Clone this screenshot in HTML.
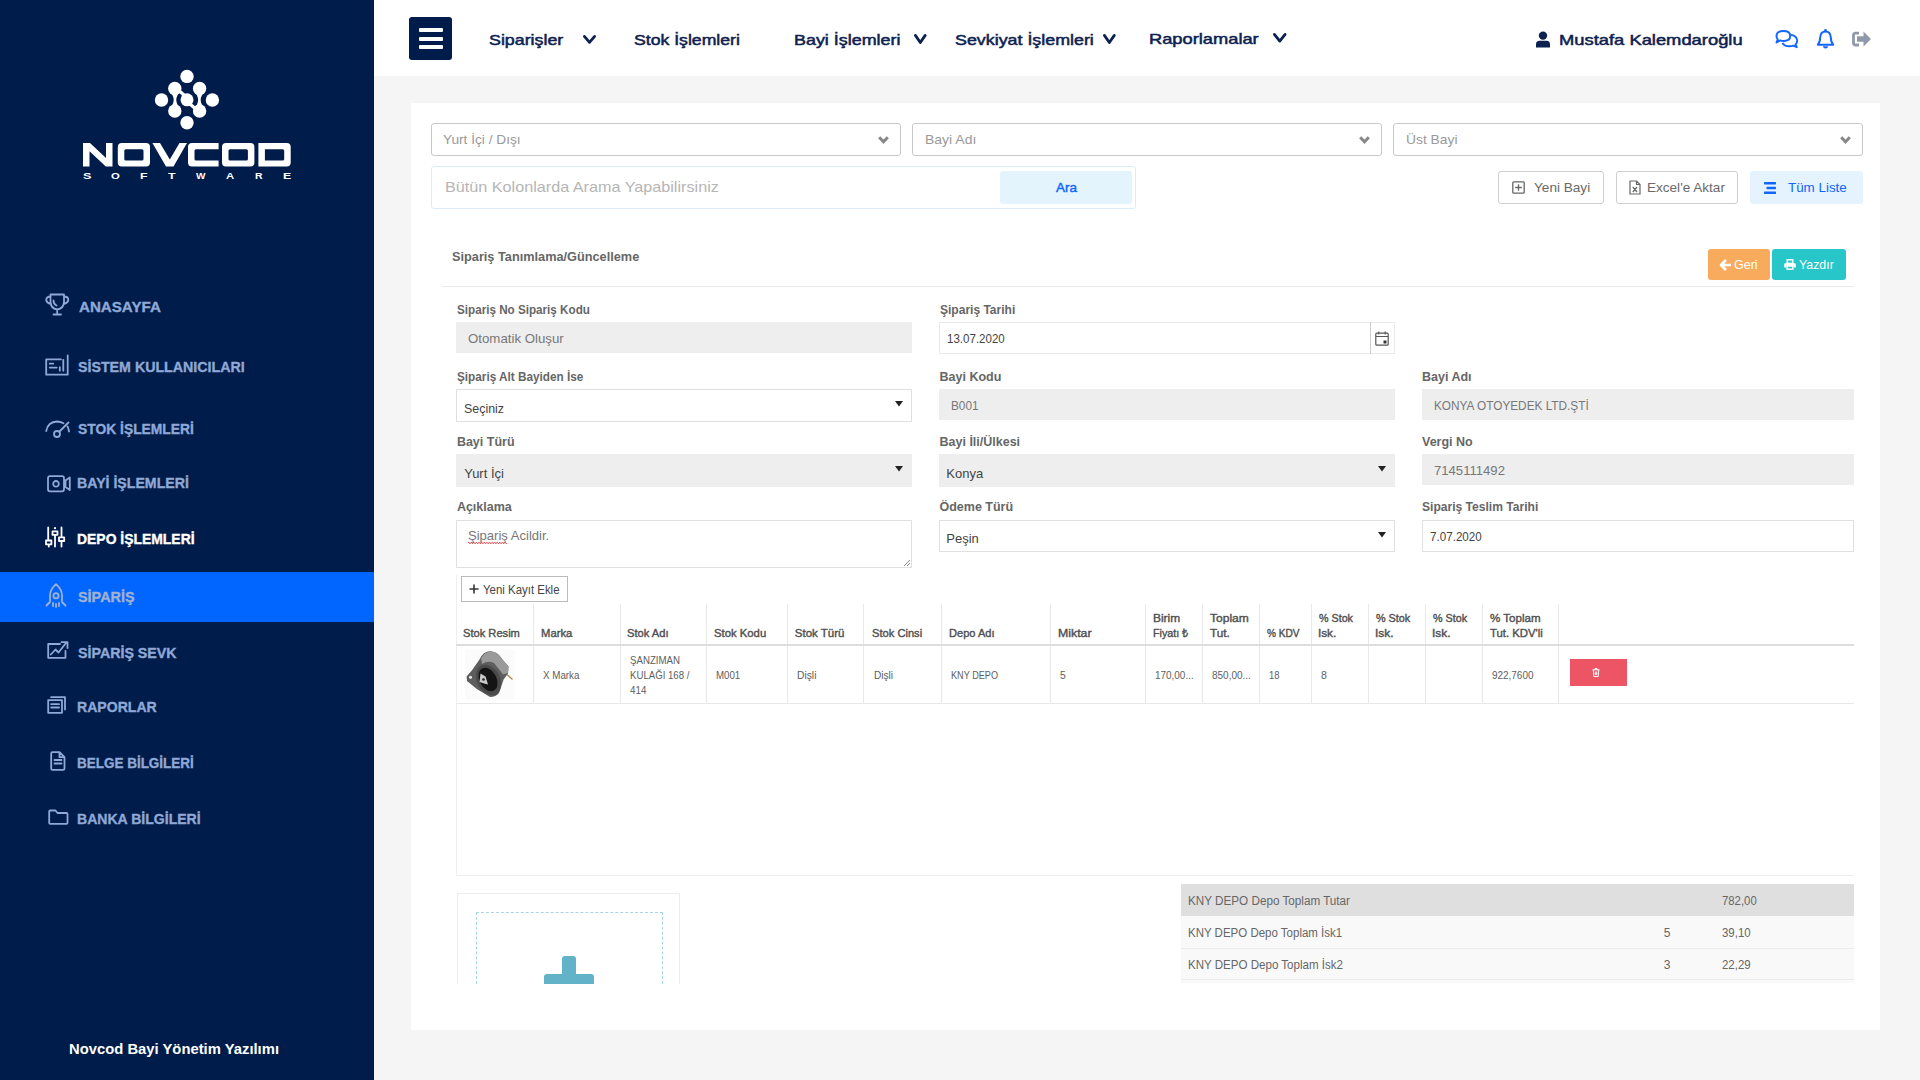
<!DOCTYPE html>
<html><head><meta charset="utf-8"><title>Novcod</title>
<style>
*{box-sizing:border-box;margin:0;padding:0}
html,body{width:1920px;height:1080px;overflow:hidden;background:#f5f5f5;font-family:"Liberation Sans",sans-serif}
.a{position:absolute}
.t{white-space:nowrap;transform-origin:0 0}
svg{overflow:visible}
</style></head><body>
<div class="a" style="left:0px;top:0px;width:374px;height:1080px;background:#001c4a"></div>
<div class="a" style="left:374px;top:0px;width:1546px;height:76px;background:#fff"></div>
<div class="a" style="left:411px;top:103px;width:1469px;height:927px;background:#fff"></div>
<svg class="a" style="left:150px;top:66px" width="74" height="66" viewBox="150 66 74 66">
<g fill="#fff"><circle cx="187" cy="76.4" r="6.7"/><circle cx="174.8" cy="88.5" r="6.7"/><circle cx="199.6" cy="88.5" r="6.7"/><circle cx="161.5" cy="100" r="6.7"/><circle cx="187" cy="99.8" r="6.5"/><circle cx="212.4" cy="100" r="6.7"/><circle cx="174.8" cy="111" r="6.7"/><circle cx="199.6" cy="111" r="6.7"/><circle cx="187" cy="122.8" r="6.7"/></g>
<g fill="#fff"><path d="M169 90.5Q178.4 100 169 109.5L181 109.5Q171.6 100 181 90.5Z"/><path d="M193.4 90.5Q202.8 100 193.4 109.5L205.4 109.5Q196 100 205.4 90.5Z"/></g><g stroke="#fff" stroke-width="3.2" stroke-linecap="round"><path d="M180 91.5L184.5 95.5"/><path d="M190 104L194.5 108"/></g></svg>
<svg class="a" style="left:83px;top:143px" width="209" height="25" viewBox="0 0 209 25">
<path fill="#fff" fill-rule="evenodd" d="M0 0H7L23 15V0H29.5V23.6H22.8L6.5 8.2V23.6H0Z M38.8 0H63Q67 0 67 4V19.6Q67 23.6 63 23.6H38.8Q34.8 23.6 34.8 19.6V4Q34.8 0 38.8 0Z M42.8 6.2Q41.3 6.2 41.3 7.7V15.9Q41.3 17.4 42.8 17.4H59Q60.5 17.4 60.5 15.9V7.7Q60.5 6.2 59 6.2Z M69.4 0H77L86.8 16.5L96.5 0H104L90.5 23.6H83Z M135.6 0H109Q105 0 105 4V19.6Q105 23.6 109 23.6H135.6V17.4H113Q111.5 17.4 111.5 15.9V7.7Q111.5 6.2 113 6.2H135.6Z M143 0H167.4Q171.4 0 171.4 4V19.6Q171.4 23.6 167.4 23.6H143Q139 23.6 139 19.6V4Q139 0 143 0Z M147 6.2Q145.5 6.2 145.5 7.7V15.9Q145.5 17.4 147 17.4H163.4Q164.9 17.4 164.9 15.9V7.7Q164.9 6.2 163.4 6.2Z M175.4 0H203.7Q207.7 0 207.7 4V19.6Q207.7 23.6 203.7 23.6H175.4Z M181.9 6.2V17.4H199.7Q201.2 17.4 201.2 15.9V7.7Q201.2 6.2 199.7 6.2Z"/></svg>
<div class="a" style="left:0px;top:572px;width:374px;height:50px;background:#0066ff"></div>
<svg class="a" style="left:45px;top:293px" width="25" height="23" viewBox="0 0 25 23" fill="none" stroke-width="1.8" stroke-linecap="round" stroke-linejoin="round" stroke="#8fa8d6"><path d="M5.5 1.5H19V8.5Q19 15.5 12.2 16.5Q5.5 15.5 5.5 8.5Z M5.5 3.5Q1.2 3.5 1.2 7Q1.7 10 6 11 M19 3.5Q23.3 3.5 23.3 7Q22.8 10 18.5 11 M12.2 16.5V21 M8.5 21.5H16 M8.5 7.5Q8.5 11 11.5 12.5"/></svg>
<svg class="a" style="left:45px;top:354px" width="24" height="22" viewBox="0 0 24 22" fill="none" stroke-width="1.8" stroke-linecap="round" stroke-linejoin="round" stroke="#8fa8d6"><path d="M16 5.3H1.2V20.7H22.7V1.3 M4.7 9.7H8.2 M4.7 13.6H11.7 M14.8 13.2V16.7 M18.3 5.8V16.7"/></svg>
<svg class="a" style="left:45px;top:420px" width="24" height="19" viewBox="0 0 24 19" fill="none" stroke-width="1.8" stroke-linecap="round" stroke-linejoin="round" stroke="#8fa8d6"><path d="M1.2 11Q3 1.8 12 1.5Q15.5 1.5 18.5 3.2 M24 11.5Q23.5 8 22.5 6.5 M14.5 11.5L23.5 2.5 M12 14m-3 0a3 3 0 1 0 6 0a3 3 0 1 0 -6 0"/></svg>
<svg class="a" style="left:46.5px;top:474.5px" width="25" height="18" viewBox="0 0 25 18" fill="none" stroke-width="1.8" stroke-linecap="round" stroke-linejoin="round" stroke="#8fa8d6"><path d="M3 1.2H15Q17 1.2 17 3.2V14.3Q17 16.3 15 16.3H3Q1 16.3 1 14.3V3.2Q1 1.2 3 1.2Z M9 8.8m-2.8 0a2.8 2.8 0 1 0 5.6 0a2.8 2.8 0 1 0 -5.6 0 M18.5 5.5L22.8 2.5V15L18.5 12Z"/></svg>
<svg class="a" style="left:45px;top:527px" width="21" height="21" viewBox="0 0 21 21" fill="none" stroke-width="1.8" stroke-linecap="round" stroke-linejoin="round" stroke="#fff"><path d="M3.2 0.5V12.5 M3.8 17.5V19.5 M1 13.5H6.4V17.3H1Z M10 7.8V19.5 M7.5 4.4H12.5V7.8H7.5Z M16.5 0.5V10 M16.5 14V19.5 M14 10.3H19.2V14H14Z"/></svg>
<svg class="a" style="left:45px;top:527px" width="21" height="21"><circle cx="10" cy="1.2" r="1.1" fill="#fff"/></svg>
<svg class="a" style="left:45px;top:583px" width="22" height="24" viewBox="0 0 22 24" fill="none" stroke-width="1.8" stroke-linecap="round" stroke-linejoin="round" stroke="#a0b1d1"><path d="M5 19Q5 16 5 12.5Q5 6.5 11 1.2Q17 6.5 17 12.5V19 M5 19L1.5 22.5 M17 19L20.5 22.5 M8 20V23 M11 21V24 M14 20V23 M11 12.8m-2.6 0a2.6 2.6 0 1 0 5.2 0a2.6 2.6 0 1 0 -5.2 0"/></svg>
<svg class="a" style="left:47px;top:641px" width="23" height="18" viewBox="0 0 23 18" fill="none" stroke-width="1.8" stroke-linecap="round" stroke-linejoin="round" stroke="#8fa8d6"><path d="M13 3H1.2V16.8H18.5V10 M3.8 13.5L8.5 8.5L11.5 11.5L19 2 M14.5 1.2H20.5V7"/></svg>
<svg class="a" style="left:47px;top:696px" width="20" height="18" viewBox="0 0 20 18" fill="none" stroke-width="1.8" stroke-linecap="round" stroke-linejoin="round" stroke="#8fa8d6"><path d="M1.2 4.2H15V16.8H1.2Z M4.2 1.2H18V13.5 M4.2 8.2H12 M4.2 11.5H12"/></svg>
<svg class="a" style="left:50px;top:751px" width="16" height="20" viewBox="0 0 16 20" fill="none" stroke-width="1.8" stroke-linecap="round" stroke-linejoin="round" stroke="#8fa8d6"><path d="M2.5 1.2H9.5L14.5 6.2V17.5Q14.5 18.8 13.2 18.8H2.5Q1.2 18.8 1.2 17.5V2.5Q1.2 1.2 2.5 1.2Z M9.5 1.2V6.2H14.5 M4.5 9H11.5 M4.5 12.5H11.5"/></svg>
<svg class="a" style="left:48px;top:809px" width="21" height="16" viewBox="0 0 21 16" fill="none" stroke-width="1.8" stroke-linecap="round" stroke-linejoin="round" stroke="#8fa8d6"><path d="M1.2 2.5Q1.2 1.5 2.2 1.5H7.5L9.5 4H18.5Q19.5 4 19.5 5V13.8Q19.5 14.8 18.5 14.8H2.2Q1.2 14.8 1.2 13.8Z"/></svg>
<div class="a" style="left:409px;top:17px;width:43px;height:43px;background:#001c4a;border-radius:3px"></div>
<div class="a" style="left:419px;top:28px;width:24px;height:4.1px;background:#fff;border-radius:1px"></div>
<div class="a" style="left:419px;top:36.7px;width:24px;height:4.1px;background:#fff;border-radius:1px"></div>
<div class="a" style="left:419px;top:45.2px;width:24px;height:4.1px;background:#fff;border-radius:1px"></div>
<svg class="a" style="left:582.75px;top:35px" width="13.0" height="8.75" viewBox="0 0 13.0 8.75"><path d="M1.4 1.4L6.5 7.35L11.6 1.4" fill="none" stroke="#0d2150" stroke-width="2.8" stroke-linecap="round" stroke-linejoin="round"/></svg>
<svg class="a" style="left:913.6px;top:33.7px" width="12.600000000000023" height="9.899999999999999" viewBox="0 0 12.600000000000023 9.899999999999999"><path d="M1.4 1.4L6.300000000000011 8.499999999999998L11.200000000000022 1.4" fill="none" stroke="#0d2150" stroke-width="2.8" stroke-linecap="round" stroke-linejoin="round"/></svg>
<svg class="a" style="left:1102.5px;top:33.7px" width="12.700000000000045" height="9.899999999999999" viewBox="0 0 12.700000000000045 9.899999999999999"><path d="M1.4 1.4L6.350000000000023 8.499999999999998L11.300000000000045 1.4" fill="none" stroke="#0d2150" stroke-width="2.8" stroke-linecap="round" stroke-linejoin="round"/></svg>
<svg class="a" style="left:1272.7px;top:33.2px" width="13.5" height="9.5" viewBox="0 0 13.5 9.5"><path d="M1.4 1.4L6.75 8.1L12.1 1.4" fill="none" stroke="#0d2150" stroke-width="2.8" stroke-linecap="round" stroke-linejoin="round"/></svg>
<svg class="a" style="left:1535px;top:31px" width="16" height="17" viewBox="0 0 16 17"><circle cx="8" cy="4.6" r="4.2" fill="#0d2150"/><path d="M1 16.5V13.5Q1 9.8 4.5 9.8H11.5Q15 9.8 15 13.5V16.5Z" fill="#0d2150"/></svg>
<svg class="a" style="left:1774px;top:28px" width="26" height="22" viewBox="0 0 26 22" fill="none" stroke="#1166ff" stroke-width="1.9" stroke-linejoin="round">
<path d="M9.5 3Q16.2 3 16.2 8Q16.2 13 9.5 13Q7.5 13 6.3 12.4L2.5 14.5L3.8 11.5Q2.5 10 2.5 8Q2.5 3 9.5 3Z"/>
<path d="M16.5 6.6Q23.3 8 23.2 12.8Q23.2 15 21.5 16.5L22.8 19.2L19 17.6Q17.5 18.2 15.5 18.2Q10 18.2 8.5 14.8"/></svg>
<svg class="a" style="left:1816px;top:28px" width="19" height="22" viewBox="0 0 19 22">
<path d="M9.5 3.5Q14.5 3.5 14.8 9.5Q15 14.5 17.2 16.8H1.8Q4 14.5 4.2 9.5Q4.5 3.5 9.5 3.5Z" fill="none" stroke="#1166ff" stroke-width="2" stroke-linejoin="round"/>
<circle cx="9.5" cy="2.4" r="1.4" fill="#1166ff"/><path d="M7 18.2H12Q12 20.6 9.5 20.6Q7 20.6 7 18.2Z" fill="#1166ff"/></svg>
<svg class="a" style="left:1851px;top:30px" width="22" height="18" viewBox="0 0 22 18">
<path d="M8 3.2H4.5Q2.5 3.2 2.5 5.2V13Q2.5 15 4.5 15H8" fill="none" stroke="#9099aa" stroke-width="2.8"/>
<path d="M6 6.3H12.5V1.5L20 9L12.5 16.5V11.7H6Z" fill="#9099aa"/></svg>
<div class="a" style="left:431px;top:123px;width:470px;height:33px;border:1px solid #c9c9c9;border-radius:3px"></div>
<svg class="a" style="left:878.0px;top:134px" width="11" height="11" viewBox="0 0 11 11"><path d="M1.2 3.2L5.5 7.8L9.8 3.2" fill="none" stroke="#888" stroke-width="3" stroke-linejoin="miter"/></svg>
<div class="a" style="left:912px;top:123px;width:470px;height:33px;border:1px solid #c9c9c9;border-radius:3px"></div>
<svg class="a" style="left:1359.0px;top:134px" width="11" height="11" viewBox="0 0 11 11"><path d="M1.2 3.2L5.5 7.8L9.8 3.2" fill="none" stroke="#888" stroke-width="3" stroke-linejoin="miter"/></svg>
<div class="a" style="left:1393px;top:123px;width:470px;height:33px;border:1px solid #c9c9c9;border-radius:3px"></div>
<svg class="a" style="left:1840.0px;top:134px" width="11" height="11" viewBox="0 0 11 11"><path d="M1.2 3.2L5.5 7.8L9.8 3.2" fill="none" stroke="#888" stroke-width="3" stroke-linejoin="miter"/></svg>
<div class="a" style="left:431px;top:166px;width:705px;height:43px;border:1px solid #dcedf9;border-radius:3px"></div>
<div class="a" style="left:1000px;top:171px;width:132px;height:32.5px;background:#e4f4fc;border-radius:3px"></div>
<div class="a" style="left:1498.4px;top:171px;width:105.5px;height:32.5px;border:1px solid #cfcfcf;border-radius:3px"></div>
<svg class="a" style="left:1512px;top:180.5px" width="13" height="13" viewBox="0 0 13 13" fill="none" stroke="#666" stroke-width="1.3"><rect x="0.8" y="0.8" width="11.4" height="11.4" rx="1"/><path d="M6.5 3.2V9.8M3.2 6.5H9.8"/></svg>
<div class="a" style="left:1616.2px;top:171px;width:121.5px;height:32.5px;border:1px solid #cfcfcf;border-radius:3px"></div>
<svg class="a" style="left:1629px;top:179.5px" width="12" height="15" viewBox="0 0 12 15" fill="none" stroke="#666" stroke-width="1.2"><path d="M1 1H7.5L11 4.5V14H1Z M7.5 1V4.5H11 M3.8 7L8 12 M8 7L3.8 12"/></svg>
<div class="a" style="left:1750.3px;top:171px;width:112.5px;height:32.5px;background:#e4f3fd;border-radius:3px"></div>
<svg class="a" style="left:1764px;top:181.5px" width="12" height="12" viewBox="0 0 12 12" fill="#1166ff"><rect x="0" y="0" width="12" height="2.4" rx="0.6"/><rect x="2.5" y="4.8" width="9.5" height="2.4" rx="0.6"/><rect x="0" y="9.6" width="12" height="2.4" rx="0.6"/></svg>
<div class="a" style="left:1708px;top:249px;width:61.8px;height:30.5px;background:#f8ab5d;border-radius:3px"></div>
<svg class="a" style="left:1719.5px;top:259px" width="12" height="12" viewBox="0 0 12 12"><path d="M6 1L1 6L6 11 M1.5 6H11" fill="none" stroke="#fff" stroke-width="2.6" stroke-linejoin="round"/></svg>
<div class="a" style="left:1772.4px;top:249px;width:73.6px;height:30.5px;background:#26c6c9;border-radius:3px"></div>
<svg class="a" style="left:1784px;top:259px" width="12" height="11" viewBox="0 0 12 11"><rect x="3.2" y="0.8" width="5.6" height="3.6" fill="none" stroke="#fff" stroke-width="1.5"/><path d="M1.2 4.3H10.8Q11.8 4.3 11.8 5.3V8.6H9.6V7H2.4V8.6H0.2V5.3Q0.2 4.3 1.2 4.3Z" fill="#fff"/><rect x="3.2" y="7" width="5.6" height="3.2" fill="none" stroke="#fff" stroke-width="1.5"/></svg>
<div class="a" style="left:441.5px;top:285.5px;width:1412.5px;height:1.0px;background:#eaeaea"></div>
<div class="a" style="left:456.4px;top:322px;width:455.70000000000005px;height:30.5px;background:#eee"></div>
<div class="a" style="left:939px;top:322px;width:455.70000000000005px;height:32.30000000000001px;background:#fff;border:1px solid #e9e9e9"></div>
<div class="a" style="left:1370px;top:322px;width:1px;height:32.30000000000001px;background:#cfcfcf"></div>
<svg class="a" style="left:1375px;top:331px" width="14" height="15" viewBox="0 0 14 15" fill="none" stroke="#555" stroke-width="1.2"><rect x="0.8" y="2.2" width="12.4" height="12" rx="1"/><path d="M0.8 5.5H13.2 M3.8 0.5V3.5 M10.2 0.5V3.5"/><rect x="8.5" y="9.5" width="3" height="3" fill="#333" stroke="none"/></svg>
<div class="a" style="left:456px;top:389px;width:456px;height:33px;background:#fff;border:1px solid #e0e0e0"></div>
<svg class="a" style="left:895px;top:400.5px" width="8" height="5.5" viewBox="0 0 8 5.5"><path d="M0 0H8L4 5.5Z" fill="#222"/></svg>
<div class="a" style="left:939px;top:389.2px;width:455.70000000000005px;height:30.80000000000001px;background:#eee"></div>
<div class="a" style="left:1422px;top:388.9px;width:432.0999999999999px;height:30.80000000000001px;background:#eee"></div>
<div class="a" style="left:456.4px;top:454.2px;width:455.70000000000005px;height:32.60000000000002px;background:#eee"></div>
<svg class="a" style="left:895px;top:466px" width="8" height="5.5" viewBox="0 0 8 5.5"><path d="M0 0H8L4 5.5Z" fill="#222"/></svg>
<div class="a" style="left:939px;top:454.2px;width:455.70000000000005px;height:32.60000000000002px;background:#eee"></div>
<svg class="a" style="left:1377.5px;top:466px" width="8" height="5.5" viewBox="0 0 8 5.5"><path d="M0 0H8L4 5.5Z" fill="#222"/></svg>
<div class="a" style="left:1422px;top:454.2px;width:432.0999999999999px;height:30.600000000000023px;background:#eee"></div>
<div class="a" style="left:456.4px;top:520.4px;width:455.70000000000005px;height:47.60000000000002px;background:#fff;border:1px solid #e0e0e0"></div>
<svg class="a" style="left:468px;top:540.5px" width="40" height="3" viewBox="0 0 40 3"><path d="M0 2 q0.65 -1.6 1.3 0 t1.3 0 q0.65 -1.6 1.3 0 t1.3 0 q0.65 -1.6 1.3 0 t1.3 0 q0.65 -1.6 1.3 0 t1.3 0 q0.65 -1.6 1.3 0 t1.3 0 q0.65 -1.6 1.3 0 t1.3 0 q0.65 -1.6 1.3 0 t1.3 0 q0.65 -1.6 1.3 0 t1.3 0 q0.65 -1.6 1.3 0 t1.3 0 q0.65 -1.6 1.3 0 t1.3 0 q0.65 -1.6 1.3 0 t1.3 0 q0.65 -1.6 1.3 0 t1.3 0 q0.65 -1.6 1.3 0 t1.3 0 q0.65 -1.6 1.3 0 t1.3 0 q0.65 -1.6 1.3 0 t1.3 0" fill="none" stroke="#e8303a" stroke-width="0.9"/></svg>
<svg class="a" style="left:902px;top:558px" width="9" height="9" viewBox="0 0 9 9"><path d="M8 2L2 8 M8 5L5 8" stroke="#888" stroke-width="1"/></svg>
<div class="a" style="left:939px;top:520.4px;width:455.70000000000005px;height:31.5px;background:#fff;border:1px solid #e0e0e0"></div>
<svg class="a" style="left:1377.5px;top:532px" width="8" height="5.5" viewBox="0 0 8 5.5"><path d="M0 0H8L4 5.5Z" fill="#222"/></svg>
<div class="a" style="left:1422px;top:520.3px;width:432.0999999999999px;height:31.90000000000009px;background:#fff;border:1px solid #e0e0e0"></div>
<div class="a" style="left:456px;top:574.5px;width:1px;height:300.5px;background:#efefef"></div>
<div class="a" style="left:456px;top:875px;width:1398px;height:1px;background:#ededed"></div>
<div class="a" style="left:461.4px;top:576.4px;width:106.2px;height:25.3px;border:1px solid #bbb;background:#fff"></div>
<svg class="a" style="left:468.5px;top:584px" width="10" height="10" viewBox="0 0 10 10"><path d="M5 0.5V9.5M0.5 5H9.5" stroke="#333" stroke-width="1.6"/></svg>
<div class="a" style="left:532.6px;top:604.3px;width:1.0px;height:99.10000000000002px;background:#e8e8e8"></div>
<div class="a" style="left:619.5px;top:604.3px;width:1.0px;height:99.10000000000002px;background:#e8e8e8"></div>
<div class="a" style="left:705.8px;top:604.3px;width:1.0px;height:99.10000000000002px;background:#e8e8e8"></div>
<div class="a" style="left:786.8px;top:604.3px;width:1.0px;height:99.10000000000002px;background:#e8e8e8"></div>
<div class="a" style="left:863.3px;top:604.3px;width:1.0px;height:99.10000000000002px;background:#e8e8e8"></div>
<div class="a" style="left:940.5px;top:604.3px;width:1.0px;height:99.10000000000002px;background:#e8e8e8"></div>
<div class="a" style="left:1050.4px;top:604.3px;width:1.0px;height:99.10000000000002px;background:#e8e8e8"></div>
<div class="a" style="left:1144.6px;top:604.3px;width:1.0px;height:99.10000000000002px;background:#e8e8e8"></div>
<div class="a" style="left:1201.7px;top:604.3px;width:1.0px;height:99.10000000000002px;background:#e8e8e8"></div>
<div class="a" style="left:1258.8px;top:604.3px;width:1.0px;height:99.10000000000002px;background:#e8e8e8"></div>
<div class="a" style="left:1310.6px;top:604.3px;width:1.0px;height:99.10000000000002px;background:#e8e8e8"></div>
<div class="a" style="left:1367.7px;top:604.3px;width:1.0px;height:99.10000000000002px;background:#e8e8e8"></div>
<div class="a" style="left:1424.8px;top:604.3px;width:1.0px;height:99.10000000000002px;background:#e8e8e8"></div>
<div class="a" style="left:1482.0px;top:604.3px;width:1.0px;height:99.10000000000002px;background:#e8e8e8"></div>
<div class="a" style="left:1557.9px;top:604.3px;width:1.0px;height:99.10000000000002px;background:#e8e8e8"></div>
<div class="a" style="left:456px;top:643.5px;width:1398px;height:2.0px;background:#ddd"></div>
<div class="a" style="left:456px;top:703px;width:1398px;height:1px;background:#e8e8e8"></div>
<div class="a" style="left:1570px;top:659px;width:57px;height:26.6px;background:#ed5565"></div>
<svg class="a" style="left:1592px;top:668px" width="8" height="9" viewBox="0 0 8 9" fill="none" stroke="#fff" stroke-width="1"><path d="M0.5 1.8H7.5 M3 1.8V0.5H5V1.8 M1.3 1.8L1.8 8.5H6.2L6.7 1.8 M3.3 3.5V7 M4.7 3.5V7"/></svg>
<svg class="a" style="left:458px;top:646px" width="64" height="58" viewBox="0 0 64 58">
<rect x="7" y="3.8" width="49.5" height="50" fill="#fbfbfb"/>
<path d="M21.5 13.4Q26 4 34 5.4Q40 6 44 13L50.5 20.4L50 27.5L45.7 33.3L41 47Q38 51 32 51L18.8 43L9 35L8.6 30.5L14 24.2Z" fill="#5d5d5d"/>
<path d="M23 12.5Q27 5 33.5 5.5Q40 6.5 44 13L50.5 20.4L50 27L45 28.5L36 17Q30 14 24 18Z" fill="#9a9a9a"/>
<ellipse cx="30.5" cy="34" rx="11.5" ry="16" transform="rotate(-28 30.5 34)" fill="#4a4a4a"/>
<ellipse cx="30" cy="33.5" rx="8.5" ry="12.5" transform="rotate(-28 30 33.5)" fill="#141414"/>
<path d="M22.5 27.5L27.5 30.5L30 38.5L26 37.5L21.5 36Z" fill="#c8c8c8"/>
<circle cx="25.5" cy="33.5" r="1.3" fill="#222"/>
<path d="M49 28.5L54.5 33.5" stroke="#a88a40" stroke-width="1.3"/>
<circle cx="12.5" cy="31.2" r="1.5" fill="#eee"/>
</svg>
<div class="a" style="left:456.6px;top:893.2px;width:223px;height:91px;border:1px solid #ededed;border-bottom:none"></div>
<div class="a" style="left:475.6px;top:912.2px;width:187px;height:72px;border:1px dashed #a6d5e2;border-bottom:none"></div>
<div class="a" style="left:561.9px;top:956px;width:14px;height:28px;background:#62b3c8;border-radius:3px 3px 0 0"></div>
<div class="a" style="left:543.7px;top:974.3px;width:50.7px;height:9.7px;background:#62b3c8;border-radius:3px 3px 0 0"></div>
<div class="a" style="left:1181.2px;top:884.3px;width:672.3999999999999px;height:32.0px;background:#e0dfe0"></div>
<div class="a" style="left:1181.2px;top:916.3px;width:672.3999999999999px;height:67.20000000000005px;background:#f9f9f9"></div>
<div class="a" style="left:1181.2px;top:947.5px;width:672.3999999999999px;height:1.0px;background:#ececec"></div>
<div class="a" style="left:1181.2px;top:979px;width:672.3999999999999px;height:1px;background:#ececec"></div>
<div class="a" style="left:411px;top:983.5px;width:1469px;height:46.5px;background:#fff"></div>
<div class="a t" style="left:83.00px;top:172.00px;font-size:9px;line-height:9px;color:#fff;font-weight:bold;transform:scaleX(1.4000);">S</div>
<div class="a t" style="left:111.30px;top:172.00px;font-size:9px;line-height:9px;color:#fff;font-weight:bold;transform:scaleX(1.2571);">O</div>
<div class="a t" style="left:140.00px;top:172.00px;font-size:9px;line-height:9px;color:#fff;font-weight:bold;transform:scaleX(1.3667);">F</div>
<div class="a t" style="left:168.20px;top:172.00px;font-size:9px;line-height:9px;color:#fff;font-weight:bold;transform:scaleX(1.3667);">T</div>
<div class="a t" style="left:195.70px;top:172.00px;font-size:9px;line-height:9px;color:#fff;font-weight:bold;transform:scaleX(1.1111);">W</div>
<div class="a t" style="left:226.20px;top:172.00px;font-size:9px;line-height:9px;color:#fff;font-weight:bold;transform:scaleX(1.2571);">A</div>
<div class="a t" style="left:254.90px;top:172.00px;font-size:9px;line-height:9px;color:#fff;font-weight:bold;transform:scaleX(1.1714);">R</div>
<div class="a t" style="left:283.00px;top:172.00px;font-size:9px;line-height:9px;color:#fff;font-weight:bold;transform:scaleX(1.3667);">E</div>
<div class="a t" style="left:79.00px;top:299.00px;font-size:15px;line-height:15px;color:#8fa8d6;font-weight:bold;transform:scaleX(1.0086);-webkit-text-stroke:0.35px currentColor;">ANASAYFA</div>
<div class="a t" style="left:78.00px;top:359.00px;font-size:15px;line-height:15px;color:#8fa8d6;font-weight:bold;transform:scaleX(0.9479);-webkit-text-stroke:0.35px currentColor;">SİSTEM KULLANICILARI</div>
<div class="a t" style="left:78.00px;top:421.00px;font-size:15px;line-height:15px;color:#8fa8d6;font-weight:bold;transform:scaleX(0.9231);-webkit-text-stroke:0.35px currentColor;">STOK İŞLEMLERİ</div>
<div class="a t" style="left:77.06px;top:475.00px;font-size:15px;line-height:15px;color:#8fa8d6;font-weight:bold;transform:scaleX(0.9429);-webkit-text-stroke:0.35px currentColor;">BAYİ İŞLEMLERİ</div>
<div class="a t" style="left:77.07px;top:531.00px;font-size:15px;line-height:15px;color:#fff;font-weight:bold;transform:scaleX(0.9282);-webkit-text-stroke:0.35px currentColor;">DEPO İŞLEMLERİ</div>
<div class="a t" style="left:78.00px;top:589.00px;font-size:15px;line-height:15px;color:#a0b1d1;font-weight:bold;transform:scaleX(0.9593);-webkit-text-stroke:0.35px currentColor;">SİPARİŞ</div>
<div class="a t" style="left:78.00px;top:645.00px;font-size:15px;line-height:15px;color:#8fa8d6;font-weight:bold;transform:scaleX(0.9488);-webkit-text-stroke:0.35px currentColor;">SİPARİŞ SEVK</div>
<div class="a t" style="left:77.06px;top:699.00px;font-size:15px;line-height:15px;color:#8fa8d6;font-weight:bold;transform:scaleX(0.9386);-webkit-text-stroke:0.35px currentColor;">RAPORLAR</div>
<div class="a t" style="left:77.10px;top:755.00px;font-size:15px;line-height:15px;color:#8fa8d6;font-weight:bold;transform:scaleX(0.8984);-webkit-text-stroke:0.35px currentColor;">BELGE BİLGİLERİ</div>
<div class="a t" style="left:77.36px;top:811.00px;font-size:15px;line-height:15px;color:#8fa8d6;font-weight:bold;transform:scaleX(0.9374);-webkit-text-stroke:0.35px currentColor;">BANKA BİLGİLERİ</div>
<div class="a t" style="left:69.40px;top:1042.00px;font-size:14px;line-height:14px;color:#fff;font-weight:bold;transform:scaleX(1.0571);">Novcod Bayi Yönetim Yazılımı</div>
<div class="a t" style="left:489.00px;top:32.00px;font-size:15px;line-height:15px;color:#0d2150;font-weight:normal;transform:scaleX(1.1875);-webkit-text-stroke:0.5px currentColor;">Siparişler</div>
<div class="a t" style="left:634.00px;top:32.00px;font-size:15px;line-height:15px;color:#0d2150;font-weight:normal;transform:scaleX(1.1763);-webkit-text-stroke:0.5px currentColor;">Stok İşlemleri</div>
<div class="a t" style="left:794.31px;top:32.00px;font-size:15px;line-height:15px;color:#0d2150;font-weight:normal;transform:scaleX(1.1940);-webkit-text-stroke:0.5px currentColor;">Bayi İşlemleri</div>
<div class="a t" style="left:955.20px;top:32.00px;font-size:15px;line-height:15px;color:#0d2150;font-weight:normal;transform:scaleX(1.1894);-webkit-text-stroke:0.5px currentColor;">Sevkiyat İşlemleri</div>
<div class="a t" style="left:1149.18px;top:31.00px;font-size:15px;line-height:15px;color:#0d2150;font-weight:normal;transform:scaleX(1.2185);-webkit-text-stroke:0.5px currentColor;">Raporlamalar</div>
<div class="a t" style="left:1558.98px;top:32.00px;font-size:15px;line-height:15px;color:#0d2150;font-weight:normal;transform:scaleX(1.2236);-webkit-text-stroke:0.5px currentColor;">Mustafa Kalemdaroğlu</div>
<div class="a t" style="left:443.40px;top:133.00px;font-size:13.5px;line-height:13.5px;color:#999;font-weight:normal;transform:scaleX(1.0150);">Yurt İçi / Dışı</div>
<div class="a t" style="left:924.96px;top:133.00px;font-size:13.5px;line-height:13.5px;color:#999;font-weight:normal;transform:scaleX(1.0366);">Bayi Adı</div>
<div class="a t" style="left:1405.77px;top:133.00px;font-size:13.5px;line-height:13.5px;color:#999;font-weight:normal;transform:scaleX(1.0251);">Üst Bayi</div>
<div class="a t" style="left:444.52px;top:179.00px;font-size:15px;line-height:15px;color:#b5b5b5;font-weight:normal;transform:scaleX(1.0791);">Bütün Kolonlarda Arama Yapabilirsiniz</div>
<div class="a t" style="left:1055.70px;top:181.00px;font-size:13px;line-height:13px;color:#1166ff;font-weight:normal;transform:scaleX(1.0333);-webkit-text-stroke:0.45px currentColor;">Ara</div>
<div class="a t" style="left:1533.60px;top:181.00px;font-size:13px;line-height:13px;color:#6a6a6a;font-weight:normal;transform:scaleX(1.0457);">Yeni Bayi</div>
<div class="a t" style="left:1646.56px;top:181.00px;font-size:13px;line-height:13px;color:#6a6a6a;font-weight:normal;transform:scaleX(1.0423);">Excel'e Aktar</div>
<div class="a t" style="left:1788.20px;top:181.00px;font-size:13px;line-height:13px;color:#1166ff;font-weight:normal;transform:scaleX(1.0292);">Tüm Liste</div>
<div class="a t" style="left:452.00px;top:250.00px;font-size:13px;line-height:13px;color:#666;font-weight:bold;transform:scaleX(0.9791);">Sipariş Tanımlama/Güncelleme</div>
<div class="a t" style="left:1733.90px;top:258.00px;font-size:13px;line-height:13px;color:#fff;font-weight:normal;transform:scaleX(0.9606);">Geri</div>
<div class="a t" style="left:1799.00px;top:258.00px;font-size:13px;line-height:13px;color:#fff;font-weight:normal;transform:scaleX(0.9496);">Yazdır</div>
<div class="a t" style="left:456.90px;top:304.00px;font-size:12.5px;line-height:12.5px;color:#666;font-weight:bold;transform:scaleX(0.9333);">Sipariş No Sipariş Kodu</div>
<div class="a t" style="left:939.50px;top:304.00px;font-size:12.5px;line-height:12.5px;color:#666;font-weight:bold;transform:scaleX(0.9615);">Şipariş Tarihi</div>
<div class="a t" style="left:456.90px;top:371.00px;font-size:12.5px;line-height:12.5px;color:#666;font-weight:bold;transform:scaleX(0.9409);">Şipariş Alt Bayiden İse</div>
<div class="a t" style="left:939.50px;top:371.00px;font-size:12.5px;line-height:12.5px;color:#666;font-weight:bold;">Bayi Kodu</div>
<div class="a t" style="left:1422.00px;top:371.00px;font-size:12.5px;line-height:12.5px;color:#666;font-weight:bold;">Bayi Adı</div>
<div class="a t" style="left:456.90px;top:436.00px;font-size:12.5px;line-height:12.5px;color:#666;font-weight:bold;">Bayi Türü</div>
<div class="a t" style="left:939.50px;top:436.00px;font-size:12.5px;line-height:12.5px;color:#666;font-weight:bold;">Bayi İli/Ülkesi</div>
<div class="a t" style="left:1422.00px;top:436.00px;font-size:12.5px;line-height:12.5px;color:#666;font-weight:bold;">Vergi No</div>
<div class="a t" style="left:456.90px;top:501.00px;font-size:12.5px;line-height:12.5px;color:#666;font-weight:bold;">Açıklama</div>
<div class="a t" style="left:939.50px;top:501.00px;font-size:12.5px;line-height:12.5px;color:#666;font-weight:bold;">Ödeme Türü</div>
<div class="a t" style="left:1422.00px;top:501.00px;font-size:12.5px;line-height:12.5px;color:#666;font-weight:bold;transform:scaleX(0.9655);">Sipariş Teslim Tarihi</div>
<div class="a t" style="left:468.10px;top:332.00px;font-size:13px;line-height:13px;color:#777;font-weight:normal;transform:scaleX(1.0192);">Otomatik Oluşur</div>
<div class="a t" style="left:947.30px;top:333.00px;font-size:12px;line-height:12px;color:#444;font-weight:normal;transform:scaleX(0.9622);">13.07.2020</div>
<div class="a t" style="left:464.20px;top:402.00px;font-size:13px;line-height:13px;color:#444;font-weight:normal;transform:scaleX(0.9564);">Seçiniz</div>
<div class="a t" style="left:951.25px;top:400.00px;font-size:12px;line-height:12px;color:#777;font-weight:normal;transform:scaleX(0.9823);">B001</div>
<div class="a t" style="left:1433.50px;top:400.00px;font-size:12px;line-height:12px;color:#777;font-weight:normal;transform:scaleX(0.9829);">KONYA OTOYEDEK LTD.ŞTİ</div>
<div class="a t" style="left:464.20px;top:467.00px;font-size:13px;line-height:13px;color:#444;font-weight:normal;">Yurt İçi</div>
<div class="a t" style="left:946.30px;top:467.00px;font-size:13px;line-height:13px;color:#444;font-weight:normal;">Konya</div>
<div class="a t" style="left:1433.50px;top:465.00px;font-size:12.5px;line-height:12.5px;color:#777;font-weight:normal;transform:scaleX(1.0486);">7145111492</div>
<div class="a t" style="left:468.10px;top:529.00px;font-size:13px;line-height:13px;color:#777;font-weight:normal;transform:scaleX(1.0034);">Şipariş Acildir.</div>
<div class="a t" style="left:946.30px;top:532.00px;font-size:13px;line-height:13px;color:#444;font-weight:normal;">Peşin</div>
<div class="a t" style="left:1429.90px;top:531.00px;font-size:12px;line-height:12px;color:#444;font-weight:normal;transform:scaleX(0.9700);">7.07.2020</div>
<div class="a t" style="left:483.00px;top:584.00px;font-size:12px;line-height:12px;color:#444;font-weight:normal;transform:scaleX(0.9529);">Yeni Kayıt Ekle</div>
<div class="a t" style="left:463.30px;top:628.00px;font-size:11.5px;line-height:11.5px;color:#505050;font-weight:normal;transform:scaleX(0.9672);-webkit-text-stroke:0.4px currentColor;">Stok Resim</div>
<div class="a t" style="left:541.10px;top:628.00px;font-size:11.5px;line-height:11.5px;color:#505050;font-weight:normal;transform:scaleX(0.9799);-webkit-text-stroke:0.4px currentColor;">Marka</div>
<div class="a t" style="left:627.40px;top:628.00px;font-size:11.5px;line-height:11.5px;color:#505050;font-weight:normal;transform:scaleX(0.9706);-webkit-text-stroke:0.4px currentColor;">Stok Adı</div>
<div class="a t" style="left:713.70px;top:628.00px;font-size:11.5px;line-height:11.5px;color:#505050;font-weight:normal;transform:scaleX(0.9835);-webkit-text-stroke:0.4px currentColor;">Stok Kodu</div>
<div class="a t" style="left:794.80px;top:628.00px;font-size:11.5px;line-height:11.5px;color:#505050;font-weight:normal;-webkit-text-stroke:0.4px currentColor;">Stok Türü</div>
<div class="a t" style="left:871.80px;top:628.00px;font-size:11.5px;line-height:11.5px;color:#505050;font-weight:normal;transform:scaleX(0.9685);-webkit-text-stroke:0.4px currentColor;">Stok Cinsi</div>
<div class="a t" style="left:948.60px;top:628.00px;font-size:11.5px;line-height:11.5px;color:#505050;font-weight:normal;transform:scaleX(0.9612);-webkit-text-stroke:0.4px currentColor;">Depo Adı</div>
<div class="a t" style="left:1058.30px;top:628.00px;font-size:11.5px;line-height:11.5px;color:#505050;font-weight:normal;transform:scaleX(1.0707);-webkit-text-stroke:0.4px currentColor;">Miktar</div>
<div class="a t" style="left:1153.10px;top:613.00px;font-size:11.5px;line-height:11.5px;color:#505050;font-weight:normal;transform:scaleX(1.0387);-webkit-text-stroke:0.4px currentColor;">Birim</div>
<div class="a t" style="left:1153.10px;top:628.00px;font-size:11.5px;line-height:11.5px;color:#505050;font-weight:normal;transform:scaleX(0.9371);-webkit-text-stroke:0.4px currentColor;">Fiyatı ₺</div>
<div class="a t" style="left:1209.70px;top:613.00px;font-size:11.5px;line-height:11.5px;color:#505050;font-weight:normal;transform:scaleX(1.0468);-webkit-text-stroke:0.4px currentColor;">Toplam</div>
<div class="a t" style="left:1209.70px;top:628.00px;font-size:11.5px;line-height:11.5px;color:#505050;font-weight:normal;transform:scaleX(1.0214);-webkit-text-stroke:0.4px currentColor;">Tut.</div>
<div class="a t" style="left:1318.60px;top:613.00px;font-size:11.5px;line-height:11.5px;color:#505050;font-weight:normal;transform:scaleX(0.9323);-webkit-text-stroke:0.4px currentColor;">% Stok</div>
<div class="a t" style="left:1317.58px;top:628.00px;font-size:11.5px;line-height:11.5px;color:#505050;font-weight:normal;transform:scaleX(1.0183);-webkit-text-stroke:0.4px currentColor;">Isk.</div>
<div class="a t" style="left:1375.70px;top:613.00px;font-size:11.5px;line-height:11.5px;color:#505050;font-weight:normal;transform:scaleX(0.9405);-webkit-text-stroke:0.4px currentColor;">% Stok</div>
<div class="a t" style="left:1374.66px;top:628.00px;font-size:11.5px;line-height:11.5px;color:#505050;font-weight:normal;transform:scaleX(1.0362);-webkit-text-stroke:0.4px currentColor;">Isk.</div>
<div class="a t" style="left:1433.00px;top:613.00px;font-size:11.5px;line-height:11.5px;color:#505050;font-weight:normal;transform:scaleX(0.9351);-webkit-text-stroke:0.4px currentColor;">% Stok</div>
<div class="a t" style="left:1431.97px;top:628.00px;font-size:11.5px;line-height:11.5px;color:#505050;font-weight:normal;transform:scaleX(1.0302);-webkit-text-stroke:0.4px currentColor;">Isk.</div>
<div class="a t" style="left:1489.80px;top:613.00px;font-size:11.5px;line-height:11.5px;color:#505050;font-weight:normal;transform:scaleX(1.0058);-webkit-text-stroke:0.4px currentColor;">% Toplam</div>
<div class="a t" style="left:1489.80px;top:628.00px;font-size:11.5px;line-height:11.5px;color:#505050;font-weight:normal;transform:scaleX(0.9854);-webkit-text-stroke:0.4px currentColor;">Tut. KDV'li</div>
<div class="a t" style="left:1266.80px;top:628.00px;font-size:11.5px;line-height:11.5px;color:#505050;font-weight:normal;transform:scaleX(0.8798);-webkit-text-stroke:0.4px currentColor;">% KDV</div>
<div class="a t" style="left:543.00px;top:670.00px;font-size:10.5px;line-height:10.5px;color:#5e5e5e;font-weight:normal;transform:scaleX(0.9324);">X Marka</div>
<div class="a t" style="left:629.50px;top:655.00px;font-size:10.5px;line-height:10.5px;color:#5e5e5e;font-weight:normal;transform:scaleX(0.9223);">ŞANZIMAN</div>
<div class="a t" style="left:629.50px;top:670.00px;font-size:10.5px;line-height:10.5px;color:#5e5e5e;font-weight:normal;transform:scaleX(0.9173);">KULAĞI 168 /</div>
<div class="a t" style="left:629.50px;top:685.00px;font-size:10.5px;line-height:10.5px;color:#5e5e5e;font-weight:normal;transform:scaleX(0.9333);">414</div>
<div class="a t" style="left:716.40px;top:670.00px;font-size:10.5px;line-height:10.5px;color:#5e5e5e;font-weight:normal;transform:scaleX(0.9233);">M001</div>
<div class="a t" style="left:797.40px;top:670.00px;font-size:10.5px;line-height:10.5px;color:#5e5e5e;font-weight:normal;transform:scaleX(0.9796);">Dişli</div>
<div class="a t" style="left:874.20px;top:670.00px;font-size:10.5px;line-height:10.5px;color:#5e5e5e;font-weight:normal;transform:scaleX(0.9642);">Dişli</div>
<div class="a t" style="left:950.70px;top:670.00px;font-size:10.5px;line-height:10.5px;color:#5e5e5e;font-weight:normal;transform:scaleX(0.8688);">KNY DEPO</div>
<div class="a t" style="left:1060.10px;top:670.00px;font-size:10.5px;line-height:10.5px;color:#5e5e5e;font-weight:normal;transform:scaleX(0.9833);">5</div>
<div class="a t" style="left:1155.20px;top:670.00px;font-size:10.5px;line-height:10.5px;color:#5e5e5e;font-weight:normal;transform:scaleX(0.9462);">170,00...</div>
<div class="a t" style="left:1212.00px;top:670.00px;font-size:10.5px;line-height:10.5px;color:#5e5e5e;font-weight:normal;transform:scaleX(0.9512);">850,00...</div>
<div class="a t" style="left:1269.40px;top:670.00px;font-size:10.5px;line-height:10.5px;color:#5e5e5e;font-weight:normal;transform:scaleX(0.8953);">18</div>
<div class="a t" style="left:1321.00px;top:670.00px;font-size:10.5px;line-height:10.5px;color:#5e5e5e;font-weight:normal;">8</div>
<div class="a t" style="left:1492.30px;top:670.00px;font-size:10.5px;line-height:10.5px;color:#5e5e5e;font-weight:normal;transform:scaleX(0.9464);">922,7600</div>
<div class="a t" style="left:1188.10px;top:895.00px;font-size:12px;line-height:12px;color:#666;font-weight:normal;transform:scaleX(0.9742);">KNY DEPO Depo Toplam Tutar</div>
<div class="a t" style="left:1721.50px;top:895.00px;font-size:12px;line-height:12px;color:#666;font-weight:normal;transform:scaleX(0.9452);">782,00</div>
<div class="a t" style="left:1188.10px;top:927.00px;font-size:12px;line-height:12px;color:#666;font-weight:normal;transform:scaleX(0.9578);">KNY DEPO Depo Toplam İsk1</div>
<div class="a t" style="left:1663.70px;top:927.00px;font-size:12px;line-height:12px;color:#666;font-weight:normal;">5</div>
<div class="a t" style="left:1721.50px;top:927.00px;font-size:12px;line-height:12px;color:#666;font-weight:normal;transform:scaleX(0.9521);">39,10</div>
<div class="a t" style="left:1188.10px;top:959.00px;font-size:12px;line-height:12px;color:#666;font-weight:normal;transform:scaleX(0.9628);">KNY DEPO Depo Toplam İsk2</div>
<div class="a t" style="left:1663.70px;top:959.00px;font-size:12px;line-height:12px;color:#666;font-weight:normal;">3</div>
<div class="a t" style="left:1721.50px;top:959.00px;font-size:12px;line-height:12px;color:#666;font-weight:normal;transform:scaleX(0.9521);">22,29</div>
</body></html>
